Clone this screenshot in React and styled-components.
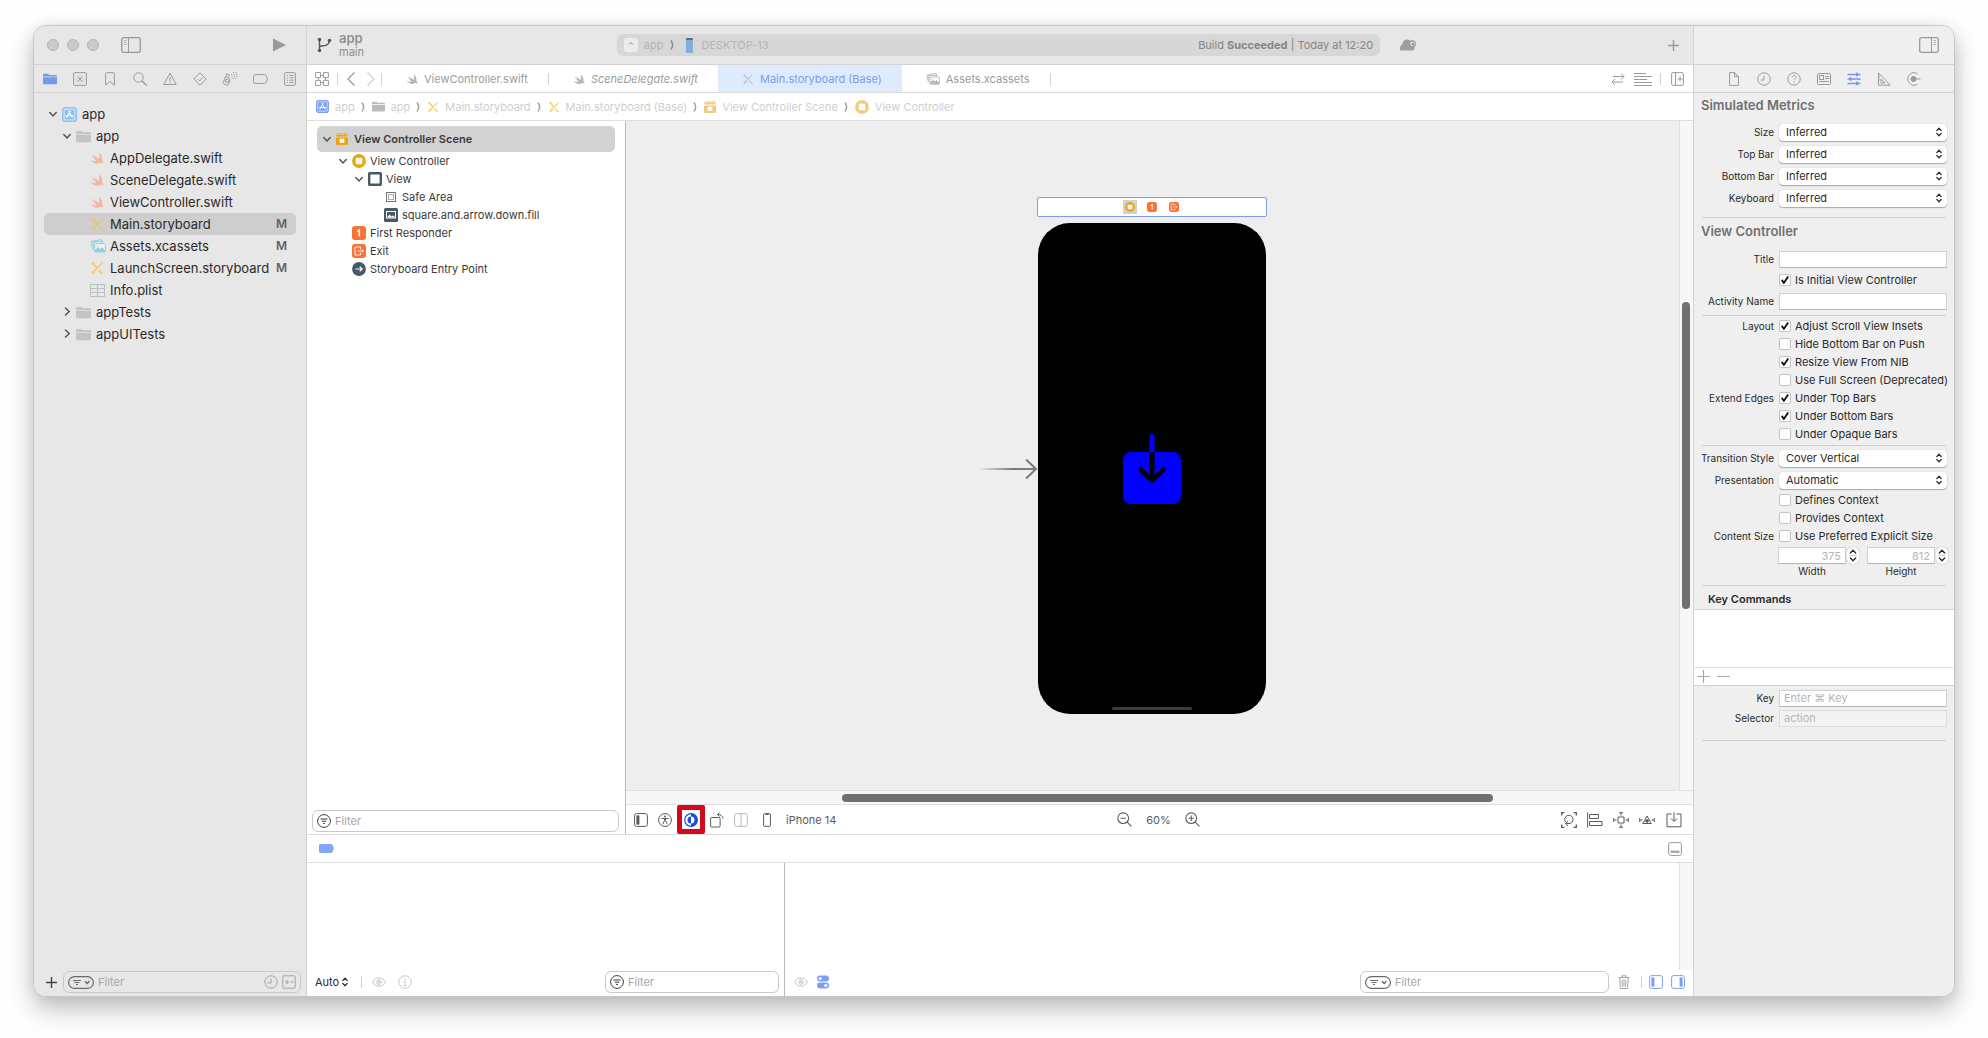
import React from 'react';
import styled, { createGlobalStyle, css } from 'styled-components';

const GlobalStyle = createGlobalStyle`
  * {
    box-sizing: border-box;
  }

  body {
    margin: 0;
    background: #fefefe;
    color: #2a2a2a;
    font-family: Inter, 'Liberation Sans', sans-serif;
    font-size: 11px;
    line-height: 14px;
  }

  button, input, select {
    font: inherit;
    color: inherit;
    margin: 0;
    padding: 0;
    border: 0;
    background: none;
  }

  svg {
    display: block;
    flex: none;
  }
`;

/* ---------- icons ---------- */

const Svg = ({ size = 16, w, h, box, children, ...rest }) => (
  <svg
    width={w || size}
    height={h || size}
    viewBox={box || `0 0 ${w || size} ${h || size}`}
    fill="none"
    stroke="currentColor"
    aria-hidden="true"
    {...rest}
  >
    {children}
  </svg>
);

const FolderIcon = ({ color = '#c4c4c4', size = 15 }) => (
  <Svg size={size} box="0 0 16 16" stroke="none">
    <path fill={color} d="M0 3.500C0 2.700.6 2 1.400 2h4.200l1.500 1.300h7.500c.8 0 1.400.6 1.400 1.400v.5H0z" />
    <path fill={color} d="M0 6h16v6.600c0 .8-.6 1.400-1.400 1.400H1.400C.6 14 0 13.400 0 12.600z" />
  </Svg>
);

const AppIcon = ({ fill = '#d5e6f7', line = '#8fc0ee', size = 15 }) => (
  <Svg size={size} box="0 0 16 16" stroke={line}>
    <rect x=".8" y=".8" width="14.400" height="14.400" rx="3" fill={fill} strokeWidth="1.600" />
    <rect x="2.800" y="2.800" width="10.400" height="10.400" rx="1.200" fill={line} stroke="none" />
    <path stroke="#fff" strokeWidth="1.200" strokeLinecap="round" d="M8.600 4.200 5 11M7.400 4.200 11 11M4 9.300h8" />
  </Svg>
);

const SwiftIcon = ({ color = '#f2b6a2', size = 14 }) => (
  <Svg size={size} box="0 0 16 16" stroke="none">
    <path
      fill={color}
      d="M9.800 1.500c3.200 2.200 4.800 5.600 3.900 8.900 1.500 1.700 1.600 3.300 1.200 4.200-.8-1.300-2-1.500-3.200-.9-3.700 1.800-8.200.8-10.900-3.300 2.200 1.400 4.700 1.700 6.500.8C5.200 9.200 3.100 6.500 2 4.500c2 1.800 3.800 3.100 5.300 4C6 7.200 4.800 5.500 3.900 3.900c2.400 2.200 4.500 3.900 6.400 5.100.9-2.500.8-5-.5-7.500z"
    />
  </Svg>
);

const StoryboardIcon = ({ color = '#f6cd6c', size = 14 }) => (
  <Svg size={size} box="0 0 16 16" stroke={color} strokeLinecap="round">
    <path strokeWidth="2.200" d="M3 2.500 8 8M10.500 11l3 3" />
    <path strokeWidth="1.800" d="M13.500 2.500 6.500 10" />
    <path strokeWidth="2.600" d="M5.500 11 3 13.500" />
    <path strokeWidth="1.200" d="M1.800 3.800 3.500 2" />
  </Svg>
);

const AssetsIcon = ({ color = '#8fd0e2', size = 16 }) => (
  <Svg size={size} box="0 0 16 16" stroke={color}>
    <path d="M2.500 10.500 1 3.500 11.500 1.600l.5 1.900" />
    <path d="M3.200 12V3.800h9.500v1.500" />
    <rect x="4.700" y="5.700" width="10.600" height="8.300" rx="1" fill="#fff" fillOpacity=".5" />
    <path fill={color} d="m5 13 3-3.500 2 2 2-1.700 3 3.200zM7.500 8.500h.1" strokeLinecap="round" />
  </Svg>
);

const PlistIcon = () => (
  <Svg w={15} h={13} stroke="#b9c1c4">
    <rect x=".5" y=".5" width="14" height="12" />
    <path d="M.5 4.500h14M.5 8.500h14M7.500.5v12" />
  </Svg>
);

const SceneIcon = ({ color = '#eaa515' }) => (
  <Svg size={12} stroke="none">
    <path fill={color} d="M0 4.500h12v6c0 .8-.7 1.500-1.500 1.500h-9C.7 12 0 11.300 0 10.500zM.5.5h11v3H.5z" />
    <path stroke="#fff" strokeOpacity=".7" d="M2 1.500h1M4.500 1.500h1M7 1.500h1M9.500 1.500h1" />
    <rect x="3.700" y="5.800" width="4.600" height="4" rx=".6" fill="#fff" />
  </Svg>
);

const ControllerIcon = ({ color = '#eaa515', size = 14 }) => (
  <Svg size={size} box="0 0 14 14" stroke="none">
    <circle cx="7" cy="7" r="6.900" fill={color} />
    <rect x="3.700" y="3.700" width="6.600" height="6.600" rx="1" fill="#fff" />
  </Svg>
);

const ViewIcon = () => (
  <Svg size={14} stroke="#465967" strokeWidth="2.400">
    <rect x="1.200" y="1.200" width="11.600" height="11.600" rx=".5" fill="#fff" />
  </Svg>
);

const SafeAreaIcon = () => (
  <Svg size={14} stroke="#777">
    <rect x="2.500" y="2.500" width="9" height="9" />
    <rect x="4.500" y="4.500" width="5" height="5" strokeOpacity=".6" />
  </Svg>
);

const ImageViewIcon = () => (
  <Svg size={14} stroke="none">
    <rect width="14" height="14" rx="1.500" fill="#465967" />
    <rect x="2.500" y="3.500" width="9" height="6.500" stroke="#fff" />
    <path fill="#fff" d="m3 9.500 2.500-3 2 2L9 7.500l2.500 2z" />
  </Svg>
);

const ResponderIcon = ({ size = 14 }) => (
  <Svg size={size} box="0 0 14 14" stroke="none">
    <rect width="14" height="14" rx="3" fill="#fa7334" />
    <path stroke="#fff" strokeWidth="1.600" d="M5.200 5.400 7.300 4v6.500" />
  </Svg>
);

const ExitIcon = ({ size = 14 }) => (
  <Svg size={size} box="0 0 14 14" stroke="none">
    <rect width="14" height="14" rx="3" fill="#fa7334" />
    <path stroke="#fff" strokeOpacity=".85" d="M8.500 5V3H3v8h5.500V9M5.500 7h6M9.700 5.200 11.500 7 9.700 8.800" />
  </Svg>
);

const EntryIcon = () => (
  <Svg size={14} stroke="none">
    <circle cx="7" cy="7" r="6.900" fill="#465967" />
    <path stroke="#fff" strokeWidth="1.200" d="M3.500 7h6.500M7.700 4.600 10.200 7 7.700 9.400" />
  </Svg>
);

const BranchIcon = () => (
  <Svg w={15} h={16} stroke="#555">
    <circle cx="2.500" cy="2.500" r="1.800" fill="#555" stroke="none" />
    <circle cx="2.500" cy="13.500" r="1.800" fill="#555" stroke="none" />
    <circle cx="12.500" cy="3.500" r="1.800" fill="#555" stroke="none" />
    <path strokeWidth="1.400" d="M2.500 3v10M2.500 9.300c4-.6 9-.2 9.800-5" />
  </Svg>
);

const SidebarIcon = ({ flip }) => (
  <Svg w={20} h={16} stroke="#999">
    <g transform={flip ? 'translate(20 0) scale(-1 1)' : undefined}>
      <rect x=".7" y=".7" width="18.600" height="14.600" rx="2" strokeWidth="1.300" />
      <path d="M7.500 1v14" />
      <path strokeOpacity=".7" d="M3 3.500h2.500M3 5.500h2.500M3 7.500h2.500" />
    </g>
  </Svg>
);

const CloudIcon = () => (
  <Svg w={16} h={12} stroke="none">
    <path fill="#9e9e9e" d="M1.500 11.500C.5 11.500 0 11 0 10c0-2.300.8-4.300 2.400-5C2.700 2.300 4.700.5 7.200.5c1.300 0 2.400.4 3.300 1.200A3.600 3.600 0 0 1 16 4.800c0 1.300-.6 2.300-1.500 2.900.4 1.900-.8 3.800-2.700 3.800z" />
    <circle cx="12.500" cy="4.800" r="2.300" fill="#e7e7e7" />
    <circle cx="12.900" cy="4.900" r="1.500" fill="#9e9e9e" />
  </Svg>
);

const ChevronDown = () => (
  <Svg w={8} h={12} strokeWidth="1.500" strokeLinecap="round">
    <path d="M.8 4.500 4 8l3.200-3.500" />
  </Svg>
);

const ChevronRight = () => (
  <Svg w={8} h={12} strokeWidth="1.500" strokeLinecap="round">
    <path d="M2.500 2 6.200 5.500 2.500 9" />
  </Svg>
);

const PlusIcon = ({ size = 11, width = 1.400 }) => (
  <Svg size={size} box="0 0 11 11" strokeWidth={width}>
    <path d="M5.500 0v11M0 5.500h11" />
  </Svg>
);

const UpDownIcon = () => (
  <Svg w={6} h={10} strokeWidth="1.300" strokeLinecap="round" strokeLinejoin="round">
    <path d="M.8 3.600 3 1.200l2.200 2.400M.8 6.400 3 8.800l2.200-2.400" />
  </Svg>
);

const StepperIcon = () => (
  <Svg w={8} h={15} strokeWidth="1.400" strokeLinecap="round" strokeLinejoin="round">
    <path d="M1.300 5 4 2.300 6.700 5M1.300 10 4 12.700 6.700 10" />
    <path stroke="#d5d5d5" strokeWidth="1" d="M0 7.500h8" />
  </Svg>
);

const FilterIcon = () => (
  <Svg size={14} stroke="#3a3a3a">
    <circle cx="7" cy="7" r="6.400" />
    <path d="M3.500 5h7M4.800 7.200h4.400M6 9.400h2" />
  </Svg>
);

const FilterMenuIcon = () => (
  <Svg w={26} h={13} stroke="#6a6a6a">
    <rect x=".6" y=".6" width="24.800" height="11.800" rx="5.900" strokeWidth="1.200" />
    <path d="M5 4.500h8M6.500 6.500h5M8 8.500h2" />
    <path strokeWidth="1.500" d="m17 5.200 2.200 2.300 2.200-2.300" />
  </Svg>
);

const EyeIcon = () => (
  <Svg w={14} h={10} stroke="#c6c6c6">
    <path d="M.6 5C2 2.300 4.300.8 7 .8s5 1.500 6.400 4.200C12 7.700 9.700 9.200 7 9.200S2 7.700.6 5z" />
    <circle cx="7" cy="5" r="2.300" />
    <circle cx="7" cy="5" r=".8" fill="#c6c6c6" />
  </Svg>
);

const InfoIcon = () => (
  <Svg size={14} stroke="#c6c6c6">
    <circle cx="7" cy="7" r="6.200" />
    <path d="M5.800 6H7v4.500M5.500 10.500h3M7 3.200v1.300" />
  </Svg>
);

const SplitIcon = ({ color = '#5a5a5a', bar, right }) => (
  <Svg size={14} stroke={color}>
    <rect x=".6" y=".6" width="12.800" height="12.800" rx="2" />
    {bar && <rect x={right ? 8.600 : 2.400} y="2.400" width="3" height="9.200" fill={color} stroke="none" />}
    {!bar && <path d="M7 1v12" />}
  </Svg>
);

const navigatorIcons = [
  ['Project', <FolderIcon color="#7398ee" size={14} />],
  ['Source Control', (
    <Svg size={14}>
      <rect x=".6" y=".6" width="12.800" height="12.800" rx="1" />
      <path d="m4 4 6 6m0-6-6 6" />
      <path d="M7 2.500v2M7 9.500v2M2.500 7h2M9.500 7h2" strokeOpacity=".4" />
    </Svg>
  )],
  ['Bookmarks', <Svg w={10} h={14}><path d="M.6 13.200V1.800C.6 1.100 1.100.6 1.800.6h6.400c.7 0 1.200.5 1.200 1.200v11.400L5 9.500z" /></Svg>],
  ['Find', <Svg size={14}><circle cx="5.500" cy="5.500" r="4.700" /><path strokeWidth="1.400" d="m9 9 4.500 4.500" /></Svg>],
  ['Issues', <Svg size={14}><path strokeLinejoin="round" d="M7 1 .8 12.500h12.400zM7 5v4M7 10v1.300" /></Svg>],
  ['Tests', <Svg size={14}><path strokeLinejoin="round" d="M7 .8 13.200 7 7 13.200.8 7zM4.500 7l2 2 3.200-3.600" /></Svg>],
  ['Debug', (
    <Svg w={16} h={14}>
      <path d="m3.500 4.500 3.500 1.500c1 .5 1.300 1.300 1 2.200l-1.500 4c-.3.800-1 1.100-1.800.8l-2.500-1c-.8-.3-1.100-1-.8-1.800zM4 3.800l.8-2 2.600 1-.8 2" />
      <circle cx="5" cy="8.800" r="1.600" />
      <path strokeDasharray="1 1.500" d="M9 2.500h6M9.500 4.500h6M10.500 6.500h5M11 .6h4" />
    </Svg>
  )],
  ['Breakpoints', <Svg w={15} h={10}><path d="M2 .6h9.500c.7 0 1 .2 1.300.6L14.500 5l-1.700 3.800c-.3.4-.6.600-1.300.600H2C1.200 9.400.6 8.900.6 8.200V1.800C.6 1.100 1.200.6 2 .6z" /></Svg>],
  ['Reports', <Svg w={12} h={14}><rect x=".6" y=".6" width="10.800" height="12.800" rx="1" /><path d="M3 3.500h1M5.500 3.500h4M3 5.800h1M5.500 5.800h4M3 8.200h1M5.500 8.200h4M3 10.500h1M5.500 10.500h4" /></Svg>]
];

const inspectorIcons = [
  ['File', <Svg w={10} h={14}><path d="M.6.600h4.900l3.900 4v8.800H.6zM5.500.6v4h3.900" /></Svg>],
  ['History', <Svg size={14}><circle cx="7" cy="7" r="6.200" /><path d="M7 3.500V8H3.700" /></Svg>],
  ['Help', <Svg size={14}><circle cx="7" cy="7" r="6.200" /><path d="M5 5.500c0-1.200.9-2 2-2s2 .8 2 1.900c0 1.300-2 1.500-2 3M7 9.600v1.200" /></Svg>],
  ['Identity', <Svg w={14} h={12}><rect x=".5" y=".5" width="13" height="11" rx="1" /><rect x="2.500" y="2.500" width="4" height="4" /><path d="M8 3.500h4M8 5.500h4M2.500 8.500h9.500" /></Svg>],
  ['Attributes', (
    <Svg size={14} stroke="#7596ee" strokeWidth="1.300">
      <path d="M.5 2.500h13M.5 7h13M.5 11.500h13" />
      <path fill="#7596ee" stroke="none" d="M9 .8h2v3.400H9zM2.500 5.300h2v3.400h-2zM9 9.800h2v3.400H9z" />
    </Svg>
  )],
  ['Size', <Svg size={14}><path d="M1.500.8v12.400h11.700zM4 7v4h4z" /><path d="M1.500 4h1.500M1.500 6h1M1.500 8h1" /></Svg>],
  ['Connections', <Svg size={14}><path d="M10.500 1.800a6.200 6.200 0 1 0 0 10.400M7 7h6.500" /><circle cx="6.500" cy="7" r="2.500" fill="currentColor" /></Svg>]
];

/* ---------- window ---------- */

const line = '#d3d3d3';

const Desktop = styled.main`
  display: flex;
  min-height: 100vh;
  padding: 25px 33px 41px;
`;

const Window = styled.div`
  flex: 1;
  display: grid;
  grid-template-columns: 273px minmax(0, 1fr) 261px;
  border: 1px solid #c6c6c6;
  border-radius: 13px;
  overflow: hidden;
  background: #fff;
  box-shadow: 0 12px 24px rgba(0, 0, 0, 0.25), 0 0 14px rgba(0, 0, 0, 0.06);
`;

const Column = styled.section`
  display: flex;
  flex-direction: column;
  min-width: 0;
`;

const Sidebar = styled(Column)`
  background: #e7e7e7;
  border-right: 1px solid ${line};
`;

const Inspector = styled(Column)`
  background: #efefef;
  border-left: 1px solid ${line};
`;

const TitleBar = styled.header`
  flex: none;
  display: flex;
  align-items: center;
  justify-content: ${props => props.$end ? 'flex-end' : 'flex-start'};
  height: 39px;
  padding: 0 15px 0 13px;
  border-bottom: 1px solid ${line};
`;

const EditorTitleBar = styled(TitleBar)`
  display: grid;
  grid-template-columns: 1fr 56% 1fr;
  padding: 0 13px 0 10px;
  background: #e7e7e7;
  color: #8f8f8f;
`;

const Light = styled.button`
  width: 12px;
  height: 12px;
  margin-right: 8px;
  border: 1px solid #b4b4b4;
  border-radius: 50%;
  background: #cbcbcb;
`;

const IconButton = styled.button`
  flex: none;
  display: flex;
  align-items: center;
  justify-content: center;
  width: ${props => props.$width || 24}px;
  height: 22px;
  color: ${props => props.$color || '#9a9a9a'};
`;

const TitleSpacer = styled.span`
  flex: 1;
`;

const Branch = styled.div`
  display: flex;
  align-items: center;
  gap: 7px;
`;

const BranchName = styled.div`
  display: flex;
  flex-direction: column;
  font-size: 11px;
  line-height: 14px;

  strong {
    font-size: 13px;
    font-weight: 600;
  }
`;

const StatusBar = styled.div`
  display: flex;
  align-items: center;
  gap: 6px;
  height: 22px;
  padding: 0 7px;
  border-radius: 6px;
  background: #d7d7d7;
  color: #b4b4b4;
`;

const SchemeIcon = styled.span`
  width: 14px;
  height: 14px;
  border-radius: 3px;
  background: #ececec;
  color: #999;
  font-size: 8px;
  text-align: center;
`;

const DeviceIcon = styled.span`
  width: 7px;
  height: 15px;
  margin: 0 3px 0 5px;
  border-radius: 1px;
  border-top: 2px solid #58708c;
  background: #86acd8;
`;

const Status = styled.span`
  margin-left: auto;
  color: #868686;
`;

const TitleActions = styled.div`
  display: flex;
  align-items: center;
  justify-content: space-between;
  padding-left: 20px;
`;

const IconStrip = styled.nav`
  flex: none;
  display: flex;
  justify-content: center;
  align-items: center;
  height: 28px;
  border-bottom: 1px solid ${line};
`;

/* ---------- project navigator ---------- */

const FileTree = styled.ul`
  flex: 1;
  margin: 0;
  padding: 10px;
  list-style: none;
  font-size: 13px;
`;

const FileRow = styled.li`
  display: flex;
  align-items: center;
  height: 22px;
  padding: 0 9px 0 ${props => 4 + props.$level * 14}px;
  border-radius: 5px;
  background: ${props => props.$selected ? '#cecece' : 'transparent'};
`;

const Twisty = styled.span`
  flex: none;
  width: 14px;
  padding-left: 1px;
  color: #555;
`;

const RowIcon = styled.span`
  flex: none;
  display: flex;
  width: ${props => props.$width}px;
`;

const Modified = styled.span`
  margin-left: auto;
  color: #626262;
  font-size: 12px;
  font-weight: 600;
`;

const BottomBar = styled.div`
  flex: none;
  display: flex;
  align-items: center;
  height: 26px;
  padding: 0 5px 2px;
`;

const FilterBox = styled.label`
  display: flex;
  align-items: center;
  gap: 4px;
  flex: ${props => props.$width ? 'none' : 1};
  width: ${props => props.$width ? `${props.$width}px` : 'auto'};
  min-width: 0;
  height: 22px;
  padding: 0 4px;
  border: 1px solid #c9c9c9;
  border-radius: 6px;
  color: #a4a4a4;

  input {
    flex: 1;
    min-width: 0;
    outline: none;
  }

  input::placeholder {
    color: #a6a6a6;
  }
`;

/* ---------- editor ---------- */

const TabBar = styled(IconStrip)`
  justify-content: flex-start;
  padding: 0 4px 0 3px;
  border-color: #dcdcdc;
`;

const Rule = styled.span`
  flex: none;
  width: 1px;
  height: 12px;
  margin: 0 ${props => props.$gap || 0}px;
  background: #d2d2d2;
`;

const Tab = styled.button`
  display: flex;
  align-items: center;
  gap: 6px;
  height: 27px;
  padding: 0 20px 0 24px;
  color: ${props => props.$active ? '#7c9cf2' : '#9c9c9c'};
  font-style: ${props => props.$preview ? 'italic' : 'normal'};
  background: ${props => props.$active ? '#deebfd' : 'transparent'};
`;

const PathBar = styled.nav`
  flex: none;
  display: flex;
  align-items: center;
  gap: 6px;
  height: 28px;
  padding-left: 9px;
  border-bottom: 1px solid #dedede;
`;

const PathLink = styled.a`
  display: flex;
  align-items: center;
  gap: 6px;
  color: #cfcfcf;
  text-decoration: none;
`;

const PathArrow = ({ color = '#a2a2a2' }) => (
  <Svg w={5} h={12} stroke={color} strokeWidth="1.500"><path d="M1 1.500c2.200 3 2.200 6 0 9" /></Svg>
);

const Workspace = styled.div`
  flex: 1;
  display: flex;
  min-height: 0;
`;

const Outline = styled.aside`
  flex: none;
  display: flex;
  flex-direction: column;
  width: 319px;
  border-right: 1px solid #b9b9b9;
`;

const OutlineTree = styled.ul`
  flex: 1;
  margin: 0;
  padding: 5px 10px;
  list-style: none;
`;

const OutlineRow = styled.li`
  display: flex;
  align-items: center;
  height: 18px;
  padding-left: ${props => 5 + props.$level * 16}px;
  color: #3a3a3a;

  ${props => props.$selected && css`
    height: 26px;
    border-radius: 5px;
    background: #d2d2d2;
    font-weight: 600;
  `}
`;

const OutlineFooter = styled.div`
  display: flex;
  padding: 0 6px 2px 5px;
`;

const CanvasArea = styled.div`
  flex: 1;
  display: flex;
  flex-direction: column;
  min-width: 0;
`;

const CanvasView = styled.div`
  flex: 1;
  display: grid;
  grid-template-columns: minmax(0, 1fr) 14px;
`;

const Canvas = styled.div`
  display: flex;
  flex-direction: column;
  align-items: center;
  justify-content: center;
  gap: 6px;
  padding-right: 2px;
  background: #eee;
`;

const VerticalTrack = styled.div`
  display: grid;
  grid-template-rows: 27fr 46fr 27fr;
  padding: 0 3px 0 2px;
  border-left: 1px solid #e0e0e0;
  background: #f7f7f7;
`;

const HorizontalTrack = styled.div`
  display: grid;
  grid-template-columns: 202fr 611fr 187fr;
  height: 14px;
  padding: 3px 0 2px;
  border-top: 1px solid #e0e0e0;
  background: #f7f7f7;
`;

const Thumb = styled.span`
  grid-area: 2 / 1;
  border-radius: 4px;
  background: #707070;
`;

const HorizontalThumb = styled(Thumb)`
  grid-area: 1 / 2;
`;

const SceneDock = styled.div`
  display: flex;
  align-items: center;
  justify-content: center;
  gap: 8px;
  width: 230px;
  height: 20px;
  border: 1px solid #7ba0ea;
  border-radius: 2px;
  background: #fff;
`;

const DockItem = styled.span`
  display: flex;
  align-items: center;
  justify-content: center;
  width: 14px;
  height: 14px;
  background: ${props => props.$selected ? '#d2d2d2' : 'transparent'};
`;

const Phone = styled.div`
  position: relative;
  display: grid;
  place-items: center;
  width: 228px;
  height: 491px;
  border-radius: 32px;
  background: #000;
`;

const EntryArrow = styled.div`
  position: absolute;
  top: 235px;
  right: 100%;
  color: #7a7a7a;
`;

const HomeIndicator = styled.div`
  position: absolute;
  bottom: 4px;
  width: 80px;
  height: 3px;
  border-radius: 2px;
  background: #3c3c3c;
`;

const CanvasBar = styled.div`
  flex: none;
  display: grid;
  grid-template-columns: 1fr auto 1fr;
  height: 30px;
  padding: 0 5px 0 3px;
  border-top: 1px solid #dedede;
  color: #5a5a5a;
`;

const BarGroup = styled.div`
  display: flex;
  align-items: center;
  justify-content: ${props => props.$end ? 'flex-end' : 'flex-start'};
`;

const DeviceName = styled.span`
  margin-left: 5px;
`;

const Highlighted = styled(IconButton)`
  width: 28px;
  height: 29px;
  border: 5px solid #cf0a1d;
  border-radius: 2px;
`;

const DebugBar = styled.div`
  flex: none;
  display: flex;
  align-items: center;
  justify-content: space-between;
  height: 29px;
  padding: 0 6px;
  border: 1px solid #dedede;
  border-width: 1px 0;
`;

const DebugArea = styled.div`
  flex: none;
  display: flex;
  height: 133px;
`;

const DebugPane = styled.div`
  display: flex;
  flex-direction: column;
  justify-content: flex-end;
  flex: ${props => props.$width ? `0 0 ${props.$width}px` : '1'};
  min-width: 0;
  border-right: ${props => props.$width ? '1px solid #b9b9b9' : '0'};
`;

const Console = styled.div`
  flex: 1;
  width: 14px;
  align-self: flex-end;
  border-left: 1px solid #e0e0e0;
  background: #f7f7f7;
`;

const ScopeButton = styled.button`
  display: flex;
  align-items: center;
  gap: 3px;
  padding: 0 9px 0 3px;
`;

/* ---------- attributes inspector ---------- */

const Heading = styled.h2`
  margin: 0;
  padding: 5px 7px 9px;
  color: #707070;
  font-size: 13px;
  line-height: 14px;
  font-weight: 600;
`;

const Divider = styled.hr`
  width: calc(100% - 16px);
  height: 1px;
  margin: ${props => props.$space || 2}px 8px 1px;
  border: 0;
  background: #cfcfcf;
`;

const Field = styled.div`
  display: grid;
  grid-template-columns: 80px minmax(0, 1fr);
  column-gap: 5px;
  align-items: center;
  height: ${props => props.$height || 22}px;
  padding-right: 7px;
`;

const FieldLabel = styled.label`
  text-align: right;
  white-space: nowrap;
  font-size: 10px;
`;

const SelectWrap = styled.div`
  display: grid;
  align-items: center;
  height: 17px;
  border-radius: 4px;
  background: #fff;
  box-shadow: 0 1px 1px rgba(0, 0, 0, 0.28), 0 0 1px rgba(0, 0, 0, 0.25);

  select {
    grid-area: 1 / 1;
    appearance: none;
    width: 100%;
    padding: 0 7px;
    outline: none;
  }

  svg {
    grid-area: 1 / 1;
    justify-self: end;
    margin-right: 5px;
    pointer-events: none;
  }
`;

const TextInput = styled.input`
  width: 100%;
  height: 17px;
  padding: 0 4px;
  border: 1px solid #d0d0d0;
  border-bottom-color: #b4b4b4;
  background: #fff;
  outline: none;

  &::placeholder {
    color: #b5b5b5;
  }

  &:disabled {
    border-color: #dcdcdc;
    background: #f3f3f3;
  }
`;

const CheckRow = styled.label`
  grid-column: 2;
  display: flex;
  align-items: center;
  gap: 4px;
  white-space: nowrap;

  input {
    appearance: none;
    flex: none;
    display: grid;
    place-items: center;
    width: 12px;
    height: 12px;
    border: 1px solid #c3c3c3;
    border-radius: 2px;
    background: #fff;
  }

  input:checked::after {
    content: '';
    width: 8px;
    height: 8px;
    background: #111;
    clip-path: polygon(0 55%, 16% 42%, 36% 66%, 80% 0, 100% 12%, 40% 100%, 32% 100%);
  }
`;

const SizeGrid = styled.div`
  display: grid;
  grid-template-columns: 68px 19px 68px 12px;
  gap: 0 1px;
  padding: 2px 6px 0 84px;
  font-size: 10px;
  line-height: 14px;
  text-align: center;

  input {
    color: #b5b5b5;
    font-size: 11px;
    text-align: right;
  }

  label:last-of-type {
    grid-column: 3;
  }
`;

const Stepper = styled.button`
  display: grid;
  place-items: center;
  width: 12px;
  height: 17px;
  border-radius: 5px;
  background: #fff;
  box-shadow: 0 0 1px rgba(0, 0, 0, 0.5);
`;

const KeyTitle = styled.h3`
  margin: 0;
  padding: 5px 14px 3px;
  font-size: 11px;
  line-height: 14px;
  font-weight: 600;
`;

const KeyTable = styled.div`
  height: 77px;
  margin-bottom: 2px;
  display: flex;
  flex-direction: column;
  justify-content: flex-end;
  border: 1px solid ${line};
  border-width: 1px 0;
  background: #fff;
`;

const KeyActions = styled.div`
  display: flex;
  align-items: center;
  gap: 7px;
  height: 18px;
  padding-left: 3px;
  border-top: 1px solid #e0e0e0;
  color: #a8a8a8;

  button {
    display: flex;
  }
`;

/* ---------- data ---------- */

const files = [
  { name: 'app', level: 0, open: true, icon: <AppIcon /> },
  { name: 'app', level: 1, open: true, icon: <FolderIcon /> },
  { name: 'AppDelegate.swift', level: 2, icon: <SwiftIcon /> },
  { name: 'SceneDelegate.swift', level: 2, icon: <SwiftIcon /> },
  { name: 'ViewController.swift', level: 2, icon: <SwiftIcon /> },
  { name: 'Main.storyboard', level: 2, icon: <StoryboardIcon color="#eac37c" />, selected: true, modified: true },
  { name: 'Assets.xcassets', level: 2, icon: <AssetsIcon />, modified: true },
  { name: 'LaunchScreen.storyboard', level: 2, icon: <StoryboardIcon />, modified: true },
  { name: 'Info.plist', level: 2, icon: <PlistIcon /> },
  { name: 'appTests', level: 1, open: false, icon: <FolderIcon /> },
  { name: 'appUITests', level: 1, open: false, icon: <FolderIcon /> }
];

const tabs = [
  { name: 'ViewController.swift', icon: <SwiftIcon color="#b5b5b5" size={12} />, rule: true },
  { name: 'SceneDelegate.swift', icon: <SwiftIcon color="#b5b5b5" size={12} />, preview: true },
  { name: 'Main.storyboard (Base)', icon: <StoryboardIcon color="#c3ccd6" size={12} />, active: true },
  { name: 'Assets.xcassets', icon: <AssetsIcon color="#b5b5b5" size={14} />, rule: true }
];

const path = [
  ['app', <AppIcon fill="#c8d7fb" line="#7d9ef3" size={13} />],
  ['app', <FolderIcon color="#b9bcbc" size={13} />],
  ['Main.storyboard', <StoryboardIcon color="#fbd271" size={12} />],
  ['Main.storyboard (Base)', <StoryboardIcon color="#fbd271" size={12} />],
  ['View Controller Scene', <SceneIcon color="#f2c983" />],
  ['View Controller', <ControllerIcon color="#f2cb80" />]
];

const outline = [
  { name: 'View Controller Scene', level: 0, open: true, icon: <SceneIcon />, selected: true },
  { name: 'View Controller', level: 1, open: true, icon: <ControllerIcon /> },
  { name: 'View', level: 2, open: true, icon: <ViewIcon /> },
  { name: 'Safe Area', level: 3, icon: <SafeAreaIcon /> },
  { name: 'square.and.arrow.down.fill', level: 3, icon: <ImageViewIcon /> },
  { name: 'First Responder', level: 1, icon: <ResponderIcon /> },
  { name: 'Exit', level: 1, icon: <ExitIcon /> },
  { name: 'Storyboard Entry Point', level: 1, icon: <EntryIcon /> }
];

const checks = [
  ['Layout', 'Adjust Scroll View Insets', true],
  [null, 'Hide Bottom Bar on Push', false],
  [null, 'Resize View From NIB', true],
  [null, 'Use Full Screen (Deprecated)', false],
  ['Extend Edges', 'Under Top Bars', true],
  [null, 'Under Bottom Bars', true],
  [null, 'Under Opaque Bars', false]
];

const contextChecks = [
  [null, 'Defines Context', false],
  [null, 'Provides Context', false],
  ['Content Size', 'Use Preferred Explicit Size', false]
];

const toId = text => text.toLowerCase().replace(/[^a-z]+/g, '-');

/* ---------- parts ---------- */

const Filter = ({ label, icon, width, children }) => (
  <FilterBox $width={width}>
    {icon}
    <input type="text" placeholder="Filter" aria-label={label} />
    {children}
  </FilterBox>
);

const SelectField = ({ label, value }) => (
  <Field>
    <FieldLabel htmlFor={toId(label)}>{label}</FieldLabel>
    <SelectWrap>
      <select id={toId(label)} defaultValue={value}>
        <option>{value}</option>
      </select>
      <UpDownIcon />
    </SelectWrap>
  </Field>
);

const TextField = ({ label, height = 24, ...rest }) => (
  <Field $height={height}>
    <FieldLabel htmlFor={toId(label)}>{label}</FieldLabel>
    <TextInput id={toId(label)} type="text" {...rest} />
  </Field>
);

const CheckField = ({ group, label, checked }) => (
  <Field $height={18}>
    {group && <FieldLabel as="span">{group}</FieldLabel>}
    <CheckRow>
      <input type="checkbox" defaultChecked={checked} />
      {label}
    </CheckRow>
  </Field>
);

const Twist = ({ open }) => (
  <Twisty>
    {open === true && <ChevronDown />}
    {open === false && <ChevronRight />}
  </Twisty>
);

const ProjectNavigator = () => (
  <Sidebar aria-label="Navigator">
    <TitleBar>
      <Light aria-label="Close" />
      <Light aria-label="Minimize" />
      <Light aria-label="Zoom" />
      <IconButton $width={48} aria-label="Toggle navigator"><SidebarIcon /></IconButton>
      <TitleSpacer />
      <IconButton aria-label="Run">
        <Svg size={14} stroke="none"><path fill="#999" d="M1 .5 14 7 1 13.500z" /></Svg>
      </IconButton>
    </TitleBar>
    <IconStrip>
      {navigatorIcons.map(([name, icon]) => (
        <IconButton key={name} $width={30} aria-label={name}>{icon}</IconButton>
      ))}
    </IconStrip>
    <FileTree>
      {files.map((file, idx) => (
        <FileRow key={idx} $level={file.level} $selected={file.selected}>
          <Twist open={file.open} />
          <RowIcon $width={20}>{file.icon}</RowIcon>
          {file.name}
          {file.modified && <Modified>M</Modified>}
        </FileRow>
      ))}
    </FileTree>
    <BottomBar>
      <IconButton $color="#444" aria-label="Add file"><PlusIcon /></IconButton>
      <Filter label="Filter files" icon={<FilterMenuIcon />}>
        <Svg size={14}><circle cx="7" cy="7" r="6.200" /><path d="M7 3.500V8H3.700" /></Svg>
        <Svg size={14}><rect x=".8" y=".8" width="12.400" height="12.400" rx="1" /><path d="M3 7h4M5 5v4M8.500 7h3" /></Svg>
      </Filter>
    </BottomBar>
  </Sidebar>
);

const SceneCanvas = () => (
  <Canvas>
    <SceneDock>
      <DockItem $selected><ControllerIcon size={10} /></DockItem>
      <DockItem><ResponderIcon size={10} /></DockItem>
      <DockItem><ExitIcon size={10} /></DockItem>
    </SceneDock>
    <Phone>
      <EntryArrow>
        <Svg w={61} h={22}>
          <defs>
            <linearGradient id="fade">
              <stop offset="0" stopColor="#7a7a7a" stopOpacity="0" />
              <stop offset=".6" stopColor="#7a7a7a" />
            </linearGradient>
          </defs>
          <path fill="url(#fade)" stroke="none" d="M1 10h58v2H1z" />
          <path strokeWidth="2" d="m49 1.500 10 9.500-10 9.500" />
        </Svg>
      </EntryArrow>
      <Svg w={58} h={70} stroke="none">
        <rect y="18" width="58" height="52" rx="8" fill="#00f" />
        <path stroke="#00f" strokeWidth="5" strokeLinecap="round" d="M29 2.500V15" />
        <path stroke="#00f" strokeWidth="5" d="M29 12v6" />
        <path stroke="#000" strokeWidth="5" d="M29 18v28" />
        <path stroke="#000" strokeWidth="4.500" strokeLinecap="round" strokeLinejoin="round" d="m17.500 35.500 11.500 11 11.500-11" />
      </Svg>
      <HomeIndicator />
    </Phone>
  </Canvas>
);

const CanvasToolbar = () => (
  <CanvasBar>
    <BarGroup>
      <IconButton aria-label="Document outline"><SplitIcon bar /></IconButton>
      <IconButton $color="#5a5a5a" aria-label="Accessibility">
        <Svg size={14}>
          <circle cx="7" cy="7" r="6.400" />
          <circle cx="7" cy="3.600" r="1" fill="currentColor" stroke="none" />
          <path d="M3.500 5.500h7M5 11l1.500-3.500V5.500M9 11 7.500 7.500V5.500" />
        </Svg>
      </IconButton>
      <Highlighted aria-label="Appearance">
        <Svg size={14} stroke="#1450dc">
          <circle cx="7" cy="7" r="6.300" strokeWidth="1.200" />
          <path fill="#1450dc" stroke="none" d="M7 .5a6.500 6.500 0 0 1 0 13v-3a3.500 3.500 0 0 0 0-7z" />
          <path fill="#1450dc" stroke="none" d="M7 3.500a3.500 3.500 0 0 0 0 7z" />
        </Svg>
      </Highlighted>
      <IconButton $color="#5a5a5a" aria-label="Orientation">
        <Svg w={14} h={16}>
          <rect x=".6" y="5.500" width="9.500" height="9.500" rx="1" />
          <path d="M7.500 2.500c3 0 4.800 1 5.500 4M9.500.5l-2 2 2 2" />
        </Svg>
      </IconButton>
      <IconButton aria-label="Split layout"><SplitIcon color="#bbb" /></IconButton>
      <IconButton $width={28} $color="#5a5a5a" aria-label="Device">
        <Svg w={8} h={14}>
          <rect x=".6" y=".6" width="6.800" height="12.800" rx="1.200" />
          <path d="M2.500 1.500h3" />
        </Svg>
      </IconButton>
      <DeviceName>iPhone 14</DeviceName>
    </BarGroup>
    <BarGroup>
      <IconButton $color="#5a5a5a" aria-label="Zoom out">
        <Svg size={15} box="0 0 14 14"><circle cx="5.800" cy="5.800" r="5" /><path d="m9.500 9.500 4 4M3.300 5.800h5" /></Svg>
      </IconButton>
      <IconButton as="span" $width={44} $color="#5a5a5a">60%</IconButton>
      <IconButton $color="#5a5a5a" aria-label="Zoom in">
        <Svg size={15} box="0 0 14 14"><circle cx="5.800" cy="5.800" r="5" /><path d="m9.500 9.500 4 4M3.300 5.800h5M5.800 3.300v5" /></Svg>
      </IconButton>
    </BarGroup>
    <BarGroup $end>
      <IconButton $width={26} $color="#5a5a5a" aria-label="Update frames">
        <Svg size={16}>
          <path strokeWidth="1.300" d="M.7 3.500V.7h2.800M12.500.7h2.800v2.800M.7 12.500v2.800h2.800M12.500 15.300h2.800v-2.800" />
          <path d="M6 11.200A4.200 4.200 0 1 1 9 11.500H5M7 9l-2.300 2.500L7 14" />
        </Svg>
      </IconButton>
      <IconButton $width={26} $color="#5a5a5a" aria-label="Align">
        <Svg size={16}><path d="M.6.500v15M2.500 2.500h9v4h-9zM2.500 9.500h12.500v4H2.500z" /></Svg>
      </IconButton>
      <IconButton $width={26} $color="#5a5a5a" aria-label="Add constraints">
        <Svg size={16}><path d="M5 5h6v6H5zM8 1v2.500M6 .7h4M8 12.500V15M6 15.300h4M1 8h2.500M.7 6v4M12.500 8H15M15.300 6v4" /></Svg>
      </IconButton>
      <IconButton $width={26} $color="#5a5a5a" aria-label="Resolve issues">
        <Svg size={16}>
          <path d="M8 4 3.800 11.500h8.400zM.7 6v4M1 8h2.500M15.300 6v4M12.500 8H15" />
          <circle cx="8" cy="9" r="1.300" fill="currentColor" />
        </Svg>
      </IconButton>
      <IconButton $width={28} $color="#5a5a5a" aria-label="Embed in">
        <Svg size={16}><path d="M5.500 2H1v12.800h14V2h-4.500M8 .5V9M5 6.500 8 9.500l3-3" /></Svg>
      </IconButton>
    </BarGroup>
  </CanvasBar>
);

const DebugPanels = () => (
  <>
    <DebugBar>
      <IconButton $width={26} aria-label="Breakpoints">
        <Svg w={15} h={9} stroke="none"><path fill="#83a6fb" d="M1.500 0h10c1 0 1.500.3 2 1l1.500 3.500L13.500 8c-.5.700-1 1-2 1h-10C.6 9 0 8.400 0 7.500v-6C0 .6.600 0 1.500 0z" /></Svg>
      </IconButton>
      <IconButton aria-label="Hide debug area">
        <Svg size={14}><rect x=".6" y=".6" width="12.800" height="12.800" rx="2" /><path fill="#aaa" stroke="none" d="M2.500 8.500h9V11h-9z" /></Svg>
      </IconButton>
    </DebugBar>
    <DebugArea>
      <DebugPane $width={478}>
        <BottomBar>
          <ScopeButton>Auto <UpDownIcon /></ScopeButton>
          <Rule $gap={4} />
          <IconButton $width={26} aria-label="Quick look"><EyeIcon /></IconButton>
          <IconButton $width={26} aria-label="Print description"><InfoIcon /></IconButton>
          <TitleSpacer />
          <Filter label="Filter variables" width={174} icon={<FilterIcon />} />
        </BottomBar>
      </DebugPane>
      <DebugPane>
        <Console />
        <BottomBar>
          <IconButton $width={22} aria-label="Preview"><EyeIcon /></IconButton>
          <IconButton $width={22} aria-label="Metadata options">
            <Svg w={12} h={14} stroke="none">
              <rect y=".5" width="12" height="6" rx="3" fill="#7d9ff2" />
              <rect y="7.500" width="12" height="6" rx="3" fill="#7d9ff2" />
              <circle cx="3.200" cy="3.500" r="1.600" fill="#fff" />
              <circle cx="8.800" cy="10.500" r="1.600" fill="#fff" />
            </Svg>
          </IconButton>
          <TitleSpacer />
          <Filter label="Filter console" width={249} icon={<FilterMenuIcon />} />
          <IconButton $width={30} $color="#a8a8a8" aria-label="Clear console">
            <Svg w={12} h={14}><path d="M.5 2.500h11M4 2.500V.8h4v1.700M1.700 2.500l.7 11h7.200l.7-11M4 4.500l.3 7M6 4.500v7M8 4.500l-.3 7" /></Svg>
          </IconButton>
          <Rule $gap={2} />
          <IconButton $width={24} aria-label="Show variables"><SplitIcon color="#7d9ff2" bar /></IconButton>
          <IconButton $width={20} aria-label="Show console"><SplitIcon color="#7d9ff2" bar right /></IconButton>
        </BottomBar>
      </DebugPane>
    </DebugArea>
  </>
);

const Editor = () => (
  <Column aria-label="Editor">
    <EditorTitleBar>
      <Branch>
        <BranchIcon />
        <BranchName>
          <strong>app</strong>
          main
        </BranchName>
      </Branch>
      <StatusBar>
        <SchemeIcon>⌃</SchemeIcon>
        app
        <PathArrow color="#8c8c8c" />
        <DeviceIcon />
        DESKTOP-13
        <Status>Build <b>Succeeded</b> | Today at 12:20</Status>
      </StatusBar>
      <TitleActions>
        <CloudIcon />
        <IconButton $width={14} aria-label="Library"><PlusIcon /></IconButton>
      </TitleActions>
    </EditorTitleBar>
    <TabBar>
      <IconButton aria-label="Related items">
        <Svg size={14}>
          <path d="M.6.600h5v5h-5zM8.400.6h5v5h-5zM.6 8.400h5v5h-5zM8.400 8.400h5v5h-5zM5.500 3.500h3M3.500 5.500v3M10.500 5.500v3M5.500 10.500h3" />
        </Svg>
      </IconButton>
      <Rule $gap={3} />
      <IconButton $width={20} aria-label="Back"><Svg w={8} h={14}><path strokeWidth="1.300" d="M7.500.5 1 7l6.500 6.500" /></Svg></IconButton>
      <IconButton $width={20} $color="#d0d0d0" aria-label="Forward"><Svg w={8} h={14}><path strokeWidth="1.300" d="M.5.500 7 7 .5 13.500" /></Svg></IconButton>
      <Rule />
      {tabs.map(tab => (
        <React.Fragment key={tab.name}>
          <Tab $active={tab.active} $preview={tab.preview}>
            {tab.icon}
            {tab.name}
          </Tab>
          {tab.rule && <Rule />}
        </React.Fragment>
      ))}
      <TitleSpacer />
      <IconButton aria-label="Swap">
        <Svg size={14}><path d="M2 4.500h11M10 1.500l3 3-3 3M12 10H1M4 7 1 10l3 3" /></Svg>
      </IconButton>
      <IconButton $width={26} aria-label="Editor options">
        <Svg w={18} h={14}><path d="M0 1.500h12M0 4.500h18M0 7.500h13M0 10.500h18M0 13.500h18" /></Svg>
      </IconButton>
      <Rule $gap={4} />
      <IconButton aria-label="Add editor">
        <Svg w={13} h={14}><rect x=".6" y=".6" width="11.800" height="12.800" rx="1.500" /><path d="M4.500.6v12.800M6.500 7h5M9 4.500v5" /></Svg>
      </IconButton>
    </TabBar>
    <PathBar>
      {path.map(([name, icon], idx) => (
        <React.Fragment key={idx}>
          {idx > 0 && <PathArrow />}
          <PathLink href="#">
            {icon}
            {name}
          </PathLink>
        </React.Fragment>
      ))}
    </PathBar>
    <Workspace>
      <Outline>
        <OutlineTree>
          {outline.map(item => (
            <OutlineRow key={item.name} $level={item.level} $selected={item.selected}>
              <Twist open={item.open} />
              <RowIcon $width={18}>{item.icon}</RowIcon>
              {item.name}
            </OutlineRow>
          ))}
        </OutlineTree>
        <OutlineFooter>
          <Filter label="Filter outline" icon={<FilterIcon />} />
        </OutlineFooter>
      </Outline>
      <CanvasArea>
        <CanvasView>
          <SceneCanvas />
          <VerticalTrack><Thumb /></VerticalTrack>
        </CanvasView>
        <HorizontalTrack><HorizontalThumb /></HorizontalTrack>
        <CanvasToolbar />
      </CanvasArea>
    </Workspace>
    <DebugPanels />
  </Column>
);

const AttributesInspector = () => (
  <Inspector aria-label="Inspector">
    <TitleBar $end>
      <IconButton $width={20} aria-label="Toggle inspector"><SidebarIcon flip /></IconButton>
    </TitleBar>
    <IconStrip>
      {inspectorIcons.map(([name, icon]) => (
        <IconButton key={name} $width={30} aria-label={name}>{icon}</IconButton>
      ))}
    </IconStrip>
    <Heading>Simulated Metrics</Heading>
    <SelectField label="Size" value="Inferred" />
    <SelectField label="Top Bar" value="Inferred" />
    <SelectField label="Bottom Bar" value="Inferred" />
    <SelectField label="Keyboard" value="Inferred" />
    <Divider $space={8} />
    <Heading>View Controller</Heading>
    <TextField label="Title" />
    <CheckField label="Is Initial View Controller" checked />
    <TextField label="Activity Name" />
    <Divider />
    {checks.map(([group, label, checked]) => (
      <CheckField key={label} group={group} label={label} checked={checked} />
    ))}
    <Divider />
    <SelectField label="Transition Style" value="Cover Vertical" />
    <SelectField label="Presentation" value="Automatic" />
    {contextChecks.map(([group, label, checked]) => (
      <CheckField key={label} group={group} label={label} checked={checked} />
    ))}
    <SizeGrid>
      <TextInput id="width" type="text" defaultValue="375" />
      <Stepper aria-label="Step width"><StepperIcon /></Stepper>
      <TextInput id="height" type="text" defaultValue="812" />
      <Stepper aria-label="Step height"><StepperIcon /></Stepper>
      <label htmlFor="width">Width</label>
      <label htmlFor="height">Height</label>
    </SizeGrid>
    <Divider $space={7} />
    <KeyTitle>Key Commands</KeyTitle>
    <KeyTable>
      <KeyActions>
        <button aria-label="Add key command"><PlusIcon size={13} width={1} /></button>
        <button aria-label="Remove key command"><Svg size={13}><path d="M0 6.500h13" /></Svg></button>
      </KeyActions>
    </KeyTable>
    <TextField label="Key" height={20} placeholder="Enter ⌘ Key" />
    <TextField label="Selector" height={20} placeholder="action" disabled />
    <Divider $space={12} />
  </Inspector>
);

const App = () => (
  <>
    <GlobalStyle />
    <Desktop>
      <Window>
        <ProjectNavigator />
        <Editor />
        <AttributesInspector />
      </Window>
    </Desktop>
  </>
);

export default App;
